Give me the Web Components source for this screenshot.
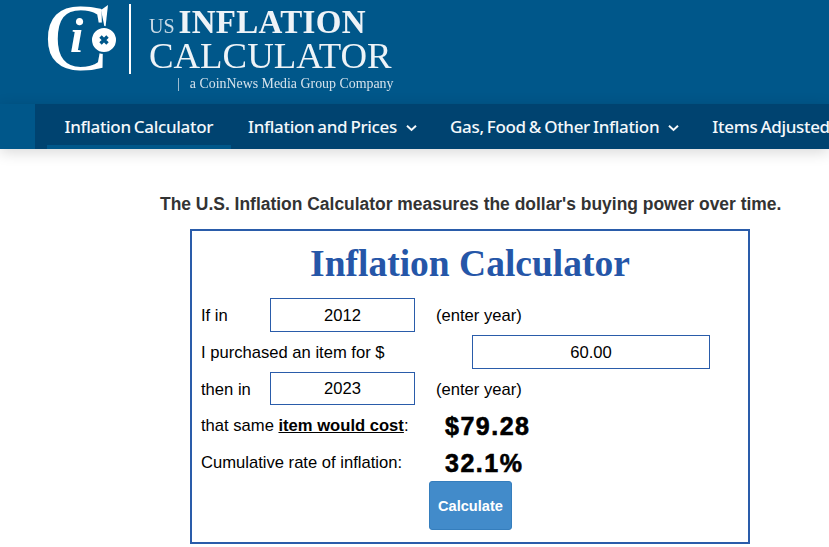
<!DOCTYPE html>
<html>
  <head>
    <meta charset="utf-8" />
    <title>Inflation Calculator</title>
    <style>
      body {
        margin: 0;
        background: #fff;
        font-family: "Liberation Sans", Arial, sans-serif;
        color: #000;
      }
    </style>
  </head>

  <body>
    <site-header></site-header>
    <site-nav>
      <nav-item active>Inflation Calculator</nav-item>
      <nav-item menu>Inflation and Prices</nav-item>
      <nav-item menu>Gas, Food &amp; Other Inflation</nav-item>
      <nav-item>Items Adjusted</nav-item>
    </site-nav>

    <calc-page>
      <span slot="intro">The U.S. Inflation Calculator measures the dollar's buying power over time.</span>
      <calc-row>
        <span slot="label">If in</span>
        <calc-field>2012</calc-field>
        <span slot="hint">(enter year)</span>
      </calc-row>
      <calc-row wide>
        <span slot="label">I purchased an item for $</span>
        <calc-field wide>60.00</calc-field>
      </calc-row>
      <calc-row>
        <span slot="label">then in</span>
        <calc-field short>2023</calc-field>
        <span slot="hint">(enter year)</span>
      </calc-row>
      <calc-result>
        <span>that same <b><u>item would cost</u></b>:</span>
        <span slot="value">$79.28</span>
      </calc-result>
      <calc-result>
        <span>Cumulative rate of inflation:</span>
        <span slot="value">32.1%</span>
      </calc-result>
      <calc-button>Calculate</calc-button>
    </calc-page>

    <template id="header-template">
      <style>
        :host {
          display: block;
          height: 104px;
          background: #00578a;
          overflow: hidden;
        }
        .logo {
          display: flex;
          padding: 3px 0 0 47px;
          color: #fff;
          font-family: "Liberation Serif", serif;
          filter: blur(0.3px);
        }
        svg {
          display: block;
          flex: none;
          overflow: visible;
        }
        .rule {
          flex: none;
          width: 2px;
          height: 70px;
          margin: 1px 18px 0 11px;
          background: #fff;
        }
        .words {
          display: flex;
          flex-direction: column;
          margin-top: 5px;
          color: #eef3f7;
          white-space: nowrap;
        }
        .top {
          display: flex;
          align-items: baseline;
          line-height: 28px;
          height: 29px;
          font-size: 33px;
          font-weight: bold;
          letter-spacing: 0.3px;
        }
        .top small {
          font-size: 20px;
          font-weight: normal;
          letter-spacing: 0;
          margin-right: 4px;
          opacity: 0.85;
        }
        .big {
          font-size: 36.8px;
          line-height: 38px;
          height: 38px;
        }
        .sub {
          margin-top: 1px;
          font-size: 13.9px;
          line-height: 16px;
          padding-left: 28px;
          color: #d5e2ec;
        }
        .sub span {
          margin-left: 10px;
        }
      </style>
      <div class="logo">
        <svg width="71" height="72" viewBox="0 0 71 72">
          <text x="-3" y="67" font-family="Liberation Serif" font-size="96" fill="#fff">C</text>
          <path d="M54 7 L61 2 L58.5 24 L57.5 24 Z" fill="#fff" />
          <text x="23" y="49" font-family="Liberation Serif" font-size="48" font-weight="bold" font-style="italic" fill="#fff">i</text>
          <circle cx="57" cy="37" r="13" fill="#fff" stroke="#00578a" stroke-width="2" />
          <path d="M53.5 33.5 L60.5 40.5 M60.5 33.5 L53.5 40.5" stroke="#00578a" stroke-width="3.4" />
        </svg>
        <div class="rule"></div>
        <div class="words">
          <div class="top"><small>US</small>INFLATION</div>
          <div class="big">CALCULATOR</div>
          <div class="sub">|<span>a CoinNews Media Group Company</span></div>
        </div>
      </div>
    </template>

    <template id="nav-template">
      <style>
        :host {
          display: block;
          height: 45px;
          position: relative;
          z-index: 1;
          background: #00578a;
          box-shadow: 0 3px 14px rgba(0, 0, 0, 0.16);
          padding-left: 35px;
        }
        .bar {
          display: flex;
          height: 45px;
          padding-left: 12px;
          background: #004370;
          overflow: hidden;
          white-space: nowrap;
        }
      </style>
      <div class="bar"><slot></slot></div>
    </template>

    <template id="nav-item-template">
      <style>
        :host {
          display: block;
          flex: none;
          padding: 0 17.5px;
          height: 45px;
          box-sizing: border-box;
          font: 500 17px/45px "Noto Sans", sans-serif;
          letter-spacing: -0.33px;
          word-spacing: -1px;
          color: #f4f8fb;
        }
        :host([active]) {
          border-bottom: 4px solid #00578a;
        }
        svg {
          margin: 0 -1.5px 0 5.5px;
          vertical-align: 1px;
        }
        :host(:not([menu])) svg {
          display: none;
        }
      </style>
      <slot></slot>
      <svg width="11" height="8" viewBox="0 0 11 8"><path d="M1 1.8 L5.5 6 L10 1.8" fill="none" stroke="#f4f8fb" stroke-width="2" /></svg>
    </template>

    <template id="page-template">
      <style>
        :host {
          display: flex;
          flex-direction: column;
          padding-left: 190px;
        }
        .intro {
          margin: 44px 0 0 -30px;
          font: bold 17.45px/22px "Liberation Sans", sans-serif;
          color: #333;
          white-space: nowrap;
        }
        .card {
          box-sizing: border-box;
          width: 560px;
          height: 315px;
          margin-top: 14px;
          padding: 0 9px;
          border: 2px solid #2a5caa;
        }
        h1 {
          margin: 0;
          height: 55px;
          padding-top: 10px;
          text-align: center;
          font: bold 37.5px/46px "Liberation Serif", serif;
          color: #2556a8;
        }
      </style>
      <div class="intro"><slot name="intro"></slot></div>
      <div class="card">
        <h1>Inflation Calculator</h1>
        <slot></slot>
      </div>
    </template>

    <template id="row-template">
      <style>
        :host {
          display: flex;
          align-items: center;
          height: 37px;
          font-size: 16.6px;
        }
        .label {
          flex: none;
          width: 69px;
          margin-top: 2px;
        }
        :host([wide]) .label {
          width: 271px;
        }
        .hint {
          margin: 2px 0 0 21px;
        }
      </style>
      <div class="label"><slot name="label"></slot></div>
      <slot></slot>
      <div class="hint"><slot name="hint"></slot></div>
    </template>

    <template id="field-template">
      <style>
        :host {
          display: block;
          box-sizing: border-box;
          width: 145px;
          height: 34px;
          border: 1px solid #2a5caa;
          text-align: center;
          font-size: 16.6px;
          line-height: 33px;
        }
        :host([wide]) {
          width: 238px;
        }
        :host([short]) {
          height: 33px;
          line-height: 31px;
        }
      </style>
      <slot></slot>
    </template>

    <template id="result-template">
      <style>
        :host {
          display: flex;
          align-items: center;
          height: 37px;
          font-size: 16.6px;
        }
        .label {
          flex: none;
          width: 244px;
        }
        .value {
          margin-top: 2px;
          font-size: 25px;
          font-weight: bold;
          letter-spacing: 1.5px;
          -webkit-text-stroke: 0.6px #000;
        }
      </style>
      <div class="label"><slot></slot></div>
      <div class="value"><slot name="value"></slot></div>
    </template>

    <template id="button-template">
      <style>
        :host {
          display: block;
          width: 83px;
          height: 49px;
          margin-left: 228px;
        }
        button {
          box-sizing: border-box;
          width: 100%;
          height: 100%;
          padding: 0;
          border: 1px solid #357ebd;
          border-radius: 3px;
          background: #428bca;
          color: #fff;
          font: bold 14.6px "Liberation Sans", sans-serif;
        }
      </style>
      <button><slot></slot></button>
    </template>

    <script type="module">
      // every element here is the same thing: clone a template into an open shadow root
      function define(name, templateId) {
        const template = document.getElementById(templateId)
        window.customElements.define(name, class extends HTMLElement {
          constructor() {
            super();
            this.attachShadow({ mode: "open" });
            this.shadowRoot.appendChild(template.content.cloneNode(true))
          }
        })
      }

      define("site-header", "header-template")
      define("site-nav", "nav-template")
      define("nav-item", "nav-item-template")
      define("calc-page", "page-template")
      define("calc-row", "row-template")
      define("calc-field", "field-template")
      define("calc-result", "result-template")
      define("calc-button", "button-template")
    </script>
  </body>
</html>
